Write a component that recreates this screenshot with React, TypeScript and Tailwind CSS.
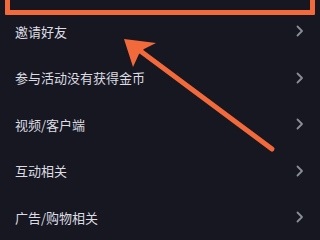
const items = ['邀请好友', '参与活动没有获得金币', '视频/客户端', '互动相关', '广告/购物相关'];

function Chevron() {
  return (
    <svg width="8" height="12" viewBox="0 0 8 12" className="shrink-0">
      <polyline points="1.5,1.5 6,6 1.5,10.5" fill="none" stroke="#8b8d96" strokeWidth="1.8" strokeLinecap="round" strokeLinejoin="round" />
    </svg>
  );
}

export default function App() {
  return (
    <div
      className="relative w-[320px] h-[240px] overflow-hidden bg-[#161720]"
      style={{ fontFamily: '"Noto Sans CJK SC", "Noto Sans", sans-serif' }}
    >
      {/* list */}
      <div className="flex flex-col pt-[8px]">
        {items.map(label => (
          <div key={label} className="flex items-center justify-between h-[46.5px] pl-[15px] pr-[16px]">
            <span className="text-[13px] leading-none text-[#dcdce2]">{label}</span>
            <Chevron />
          </div>
        ))}
      </div>

      {/* highlight box */}
      <div className="absolute left-[5px] right-[5px] top-[-40px] h-[55px] border-[5px] border-[#f26a3b] rounded-[1px]" />

      {/* arrow */}
      <svg className="absolute inset-0" width="320" height="240" viewBox="0 0 320 240">
        <line x1="131" y1="44" x2="272" y2="149" stroke="#f26a3b" strokeWidth="5" strokeLinecap="round" />
        <path d="M124 39 L156 43 L144 49 L139 54 L133 67 Z" fill="#f26a3b" />
      </svg>
    </div>
  );
}
